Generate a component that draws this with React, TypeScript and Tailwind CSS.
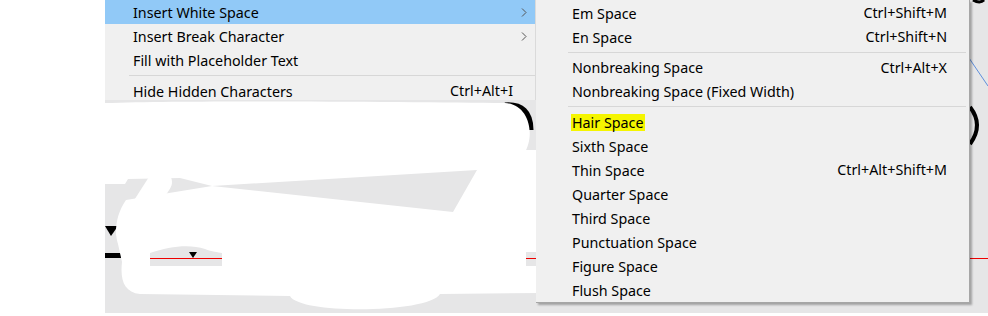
import React from 'react';

type Item = { label: string; shortcut?: string; sub?: boolean; active?: boolean; mark?: boolean } | 'sep';

const mainItems: Item[] = [
  { label: 'Insert White Space', sub: true, active: true },
  { label: 'Insert Break Character', sub: true },
  { label: 'Fill with Placeholder Text' },
  'sep',
  { label: 'Hide Hidden Characters', shortcut: 'Ctrl+Alt+I' },
];

const spaceItems: Item[] = [
  { label: 'Em Space', shortcut: 'Ctrl+Shift+M' },
  { label: 'En Space', shortcut: 'Ctrl+Shift+N' },
  'sep',
  { label: 'Nonbreaking Space', shortcut: 'Ctrl+Alt+X' },
  { label: 'Nonbreaking Space (Fixed Width)' },
  'sep',
  { label: 'Hair Space', mark: true },
  { label: 'Sixth Space' },
  { label: 'Thin Space', shortcut: 'Ctrl+Alt+Shift+M' },
  { label: 'Quarter Space' },
  { label: 'Third Space' },
  { label: 'Punctuation Space' },
  { label: 'Figure Space' },
  { label: 'Flush Space' },
];

const Chevron = () => (
  <svg width="6" height="9" viewBox="0 0 6 9" className="text-[#555]">
    <path d="M1 0.5 L5 4.5 L1 8.5" fill="none" stroke="currentColor" strokeWidth="1" />
  </svg>
);

// white scribbles painted over the document page
const Scribbles = () => (
  <svg className="absolute inset-0" width="883" height="313" viewBox="105 0 883 313">
    {/* stray bits of the page drawing */}
    <path d="M973 0 Q980 4 984 0" fill="none" stroke="#000" strokeWidth="3" />
    <line x1="969" y1="58" x2="988" y2="86" stroke="#3c78d8" strokeWidth="0.8" />
    <path d="M970 107 Q984 125 970 144" fill="none" stroke="#000" strokeWidth="4" />
    <rect x="968" y="236" width="2" height="10" fill="#000" />
    <line x1="969" y1="258.5" x2="988" y2="258.5" stroke="#e00" strokeWidth="1" />
    <path d="M105 226 L118 226 L111 236 Z" fill="#000" />
    <rect x="105" y="253" width="16" height="5" fill="#000" />
    <path d="M505 106 Q530 104 530 130" fill="none" stroke="#000" strokeWidth="7" />
    <rect x="330" y="104" width="26" height="5" fill="#000" />

    {/* top stroke */}
    <path
      d="M105 103 C200 100 420 102 505 103 C538 105 538 160 505 168 L477 170 L212 186 L180 178 L128 179 L125 184 L105 184 Z"
      fill="#fff"
    />
    {/* everything below the gray wedge */}
    <path
      d="M126 200 L212 186 L453 212 L477 170 L505 150 L540 150 L540 293 L440 294 C430 313 300 315 290 296 L140 294 C124 292 120 280 122 262 L118 244 C114 232 116 214 126 200 Z"
      fill="#fff"
    />
    <path d="M160 182 L128 232" stroke="#fff" strokeWidth="24" strokeLinecap="round" />

    {/* gray pockets left open */}
    <path d="M150 253 C170 246 190 244 205 249 C212 252 218 252 222 253 L222 266 L150 266 Z" fill="#e6e6e7" />
    <line x1="150" y1="258.5" x2="222" y2="258.5" stroke="#e00" strokeWidth="1" />
    <path d="M189 252 L197 252 L193 258 Z" fill="#000" />
    <rect x="526" y="252" width="14" height="14" fill="#e6e6e7" />
    <line x1="526" y1="258.5" x2="540" y2="258.5" stroke="#e00" strokeWidth="1" />
  </svg>
);

const MenuRow = ({ item, textLeft }: { item: Exclude<Item, 'sep'>; textLeft: string }) => (
  <div
    className={`flex h-6 items-center pr-[22px] ${textLeft} ${item.active ? 'bg-[#91c9f7]' : ''}`}
  >
    <span className={`leading-[17px] ${item.mark ? 'bg-[#f5f500] px-px -mx-px' : ''}`}>{item.label}</span>
    <span className="ml-auto">{item.shortcut}</span>
    {item.sub && (
      <span className="-mr-[14px] ml-auto flex items-center">
        <Chevron />
      </span>
    )}
  </div>
);

export default function App() {
  return (
    <div
      className="relative flex h-[316px] w-[988px] overflow-hidden bg-white text-[14.3px] text-black"
      style={{ fontFamily: '"Segoe UI", "Noto Sans", "Open Sans", sans-serif' }}
    >
      <div className="w-[105px] shrink-0" />
      <div className="relative h-[313px] flex-1 bg-[#e6e6e7]">
        <Scribbles />
      </div>

      {/* parent context menu */}
      <div className="absolute left-[105px] top-0 h-[100px] w-[431px] overflow-hidden border-r border-[#dadada] bg-[#f0f0f0]">
        {mainItems.map((item, i) =>
          item === 'sep' ? (
            <div key={i} className="flex h-[7px] items-center pl-6">
              <div className="h-px w-full bg-[#d7d7d7]" />
            </div>
          ) : (
            <MenuRow key={i} item={item} textLeft="pl-7" />
          )
        )}
      </div>

      {/* white space submenu */}
      <div className="absolute left-[536px] top-0 w-[434px] border-b border-r border-[#a6a6a6] bg-[#f0f0f0] pt-px shadow-[2px_2px_2px_rgba(0,0,0,0.3)]">
        {spaceItems.map((item, i) =>
          item === 'sep' ? (
            <div key={i} className="flex h-[6.5px] items-center pl-8 pr-[3px]">
              <div className="h-px w-full bg-[#d7d7d7]" />
            </div>
          ) : (
            <MenuRow key={i} item={item} textLeft="pl-9" />
          )
        )}
      </div>
    </div>
  );
}
